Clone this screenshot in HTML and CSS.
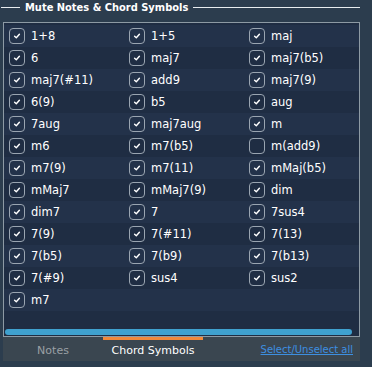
FILE: index.html
```html
<!DOCTYPE html>
<html lang="en">
<head>
    <meta charset="UTF-8">
    <title>Mute Notes &amp; Chord Symbols</title>
    <link rel="stylesheet" href="styles.css">
</head>
<body>
    <div class="frame">
        <div class="legend">
            <span class="rule short"></span>
            <span class="legend-text">Mute Notes &amp; Chord Symbols</span>
            <span class="rule long"></span>
        </div>
        <div class="panel">
            <div class="rows" id="rows"></div>
            <div class="scrollbar"></div>
        </div>
        <div class="tabs">
            <div class="tab">Notes</div>
            <div class="tab active">Chord Symbols</div>
            <a class="select-all" href="#">Select/Unselect all</a>
        </div>
    </div>

    <script>
        // chord list, three per row
        const chords = [
            '1+8', '1+5', 'maj',
            '6', 'maj7', 'maj7(b5)',
            'maj7(#11)', 'add9', 'maj7(9)',
            '6(9)', 'b5', 'aug',
            '7aug', 'maj7aug', 'm',
            'm6', 'm7(b5)', 'm(add9)',
            'm7(9)', 'm7(11)', 'mMaj(b5)',
            'mMaj7', 'mMaj7(9)', 'dim',
            'dim7', '7', '7sus4',
            '7(9)', '7(#11)', '7(13)',
            '7(b5)', '7(b9)', '7(b13)',
            '7(#9)', 'sus4', 'sus2',
            'm7'
        ];
        const unchecked = ['m(add9)'];
        const tick = '<svg viewBox="0 0 16 16" width="16" height="16"><path d="M5.6 8.2 L7.3 9.8 L10.4 6.2" fill="none" stroke="#fff" stroke-width="1.4" stroke-linecap="round" stroke-linejoin="round"/></svg>';
        const rows = document.getElementById('rows');
        for (let i = 0; i < chords.length; i += 3) {
            const row = document.createElement('div');
            row.className = 'row';
            chords.slice(i, i + 3).forEach(name => {
                const on = !unchecked.includes(name);
                row.innerHTML += '<label class="item"><span class="box">' + (on ? tick : '') + '</span><span class="name">' + name + '</span></label>';
            });
            rows.appendChild(row);
        }
    </script>
</body>
</html>
```

FILE: styles.css
```css
body {
    margin: 0;
    background: #2c3d4e;
    color: #fff;
    font-family: 'DejaVu Sans', Verdana, sans-serif;
    width: 372px;
    height: 367px;
    overflow: hidden;
}
.frame {
    padding: 0 12px 0 3px;
}
.legend {
    display: flex;
    align-items: center;
    height: 15px;
}
.rule {
    height: 1px;
    background: #e8ecef;
}
.rule.short {
    width: 19px;
    margin-left: -2px;
}
.rule.long {
    flex: 1;
}
.legend-text {
    font-size: 11px;
    font-weight: bold;
    font-stretch: condensed;
    padding: 0 5px;
}
.panel {
    margin-top: 7px;
    border: 1px solid #8d9aa4;
    background: #1f2d43;
    height: 313px;
    display: flex;
    flex-direction: column;
}
.rows {
    flex: 1;
    padding-top: 2px;
}
.row {
    display: flex;
    height: 22px;
    padding-left: 5px;
}
.row:nth-child(odd) {
    background: #23324a;
}
.item {
    flex: 0 0 120px;
    display: flex;
    align-items: center;
    font-size: 11.5px;
}
.box {
    width: 14px;
    height: 14px;
    border: 1px solid #9aa5b1;
    border-radius: 4px;
    margin-right: 6px;
    position: relative;
}
.box svg {
    position: absolute;
    left: -1px;
    top: -1px;
}
.scrollbar {
    height: 6px;
    margin: 0 7px 1px 1px;
    background: #3fa1cf;
    border-radius: 3px;
}
.tabs {
    display: flex;
    align-items: center;
    height: 24px;
    background: #3a4650;
    font-size: 11px;
}
.tab {
    width: 100px;
    height: 100%;
    display: flex;
    align-items: center;
    justify-content: center;
    color: #9aa0a5;
    box-sizing: border-box;
    border-top: 3px solid transparent;
}
.tab.active {
    color: #fff;
    border-top-color: #f0883a;
}
.select-all {
    margin-left: auto;
    margin-right: 7px;
    color: #3d8fe0;
    font-size: 10px;
}
```
